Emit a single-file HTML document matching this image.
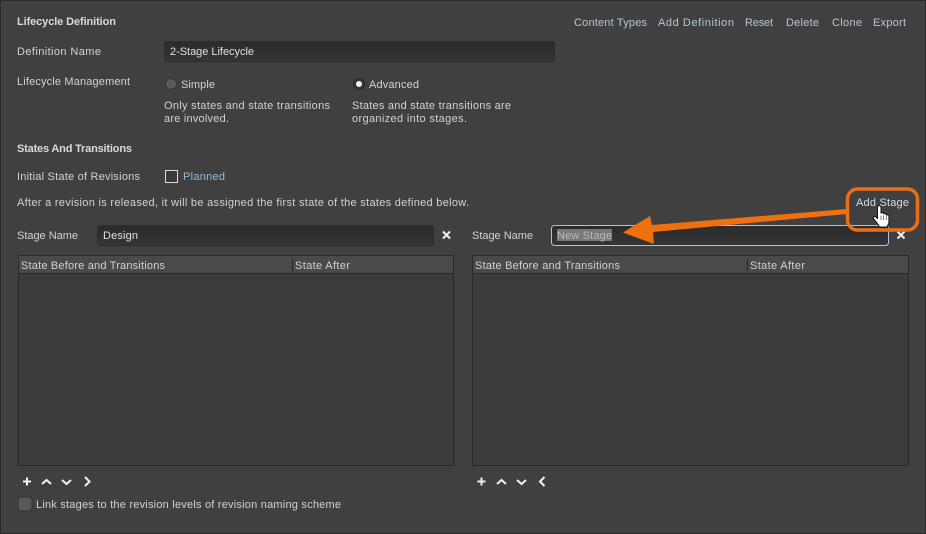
<!DOCTYPE html>
<html><head><meta charset="utf-8"><title>Lifecycle Definition</title>
<style>
html,body{margin:0;padding:0;background:#404040;width:926px;height:534px;overflow:hidden}
svg{display:block}
text{font-family:"Liberation Sans",sans-serif;font-size:11px;fill:#d2d2d2}
.b{font-weight:bold;fill:#dadada}
.l{fill:#b4c6d6}
.i{fill:none;stroke:#f2f2f2;stroke-width:2}
</style></head><body>
<svg width="926" height="534" viewBox="0 0 926 534" xmlns="http://www.w3.org/2000/svg">
<defs><linearGradient id="g" x1="0" y1="0" x2="0" y2="1"><stop offset="0" stop-color="#2b2b2b"/><stop offset="1" stop-color="#353535"/></linearGradient></defs>
<rect width="926" height="534" fill="#404040"/>
<rect x="0.5" y="0.5" width="925" height="533" fill="none" stroke="#2a2a2a"/>

<text class="b" x="17" y="25" textLength="99">Lifecycle Definition</text>
<text class="l" x="574" y="26" textLength="73">Content Types</text>
<text class="l" x="658" y="26" textLength="76">Add Definition</text>
<text class="l" x="745" y="26" textLength="28">Reset</text>
<text class="l" x="786" y="26" textLength="33">Delete</text>
<text class="l" x="832" y="26" textLength="30">Clone</text>
<text class="l" x="873" y="26" textLength="33">Export</text>

<text x="17" y="55" textLength="84">Definition Name</text>
<rect x="164.5" y="41.5" width="390" height="20" rx="3" fill="url(#g)" stroke="#2c2c2c"/>
<text x="170" y="55" textLength="84" style="fill:#e0e0e0">2-Stage Lifecycle</text>

<text x="17" y="85" textLength="113">Lifecycle Management</text>
<circle cx="171" cy="84" r="5.5" fill="#5a5a5a" stroke="#383838"/>
<text x="181" y="88" textLength="34">Simple</text>
<text x="164" y="109" textLength="166">Only states and state transitions</text>
<text x="164" y="122" textLength="65">are involved.</text>
<circle cx="359" cy="84" r="5.5" fill="#333" stroke="#2c2c2c"/>
<circle cx="359" cy="84" r="3" fill="#f4f4f4"/>
<text x="369" y="88" textLength="50">Advanced</text>
<text x="352" y="109" textLength="159">States and state transitions are</text>
<text x="352" y="122" textLength="115">organized into stages.</text>

<text class="b" x="17" y="152" textLength="115">States And Transitions</text>
<text x="17" y="180" textLength="123">Initial State of Revisions</text>
<rect x="165.5" y="170.5" width="12" height="12" fill="#3a3a3a" stroke="#dcdcdc"/>
<text x="183" y="180" textLength="42" style="fill:#93bcd6">Planned</text>
<text x="17" y="206" textLength="452">After a revision is released, it will be assigned the first state of the states defined below.</text>

<text x="17" y="239" textLength="61">Stage Name</text>
<rect x="97.5" y="225.5" width="336" height="20" rx="3" fill="url(#g)" stroke="#2c2c2c"/>
<text x="103" y="239" textLength="35" style="fill:#e0e0e0">Design</text>
<path class="i" d="M443 231.500l7 7M450 231.500l-7 7" stroke-width="2.200"/>

<text x="472" y="239" textLength="61">Stage Name</text>
<rect x="551.500" y="225.500" width="337" height="20" rx="3" fill="url(#g)" stroke="#a9c6dc"/>
<rect x="557" y="229" width="55" height="12" fill="#787878"/>
<text x="557" y="239" textLength="55" style="fill:#b8b8b8">New Stage</text>
<path class="i" d="M897.500 231.500l7 7M904.500 231.500l-7 7" stroke-width="2.200"/>

<!-- left table -->
<rect x="18.500" y="255.500" width="435" height="210" fill="#3c3c3c" stroke="#2a2a2a"/>
<rect x="19" y="256" width="434" height="17" fill="#4a4a4a"/>
<line x1="19" x2="453" y1="273.500" y2="273.500" stroke="#2a2a2a"/>
<line x1="292.500" x2="292.500" y1="259" y2="271" stroke="#252525"/>
<text x="21" y="269" textLength="144">State Before and Transitions</text>
<text x="295" y="269" textLength="55">State After</text>

<!-- right table -->
<rect x="472.500" y="255.500" width="436" height="210" fill="#3c3c3c" stroke="#2a2a2a"/>
<rect x="473" y="256" width="435" height="17" fill="#4a4a4a"/>
<line x1="473" x2="908" y1="273.500" y2="273.500" stroke="#2a2a2a"/>
<line x1="747.500" x2="747.500" y1="259" y2="271" stroke="#252525"/>
<text x="475" y="269" textLength="145">State Before and Transitions</text>
<text x="750" y="269" textLength="55">State After</text>

<!-- toolbars -->
<path class="i" d="M23 481.500h8M27 477.500v8"/>
<path class="i" d="M42 484l4.500-4 4.500 4"/>
<path class="i" d="M62 480l4.500 4 4.500-4"/>
<path class="i" d="M85 477l4.500 4.500-4.500 4.500"/>
<path class="i" d="M477.500 481.500h8M481.500 477.500v8"/>
<path class="i" d="M497 484l4.500-4 4.500 4"/>
<path class="i" d="M517 480l4.500 4 4.500-4"/>
<path class="i" d="M544.500 477l-4.500 4.500 4.500 4.500"/>

<rect x="18" y="497" width="14" height="14" rx="3" fill="#585858" stroke="#2f2f2f"/>
<text x="36" y="508" textLength="305">Link stages to the revision levels of revision naming scheme</text>

<!-- Add Stage -->
<text x="856" y="206" textLength="53" style="fill:#d4dde6">Add Stage</text>

<!-- orange callout -->
<rect x="847.500" y="189" width="70" height="41" rx="10" fill="none" stroke="#e9701a" stroke-width="3.500"/>
<path d="M847 209L652 225L650 216L623 232.500L654 244L653 232L847 214Z" fill="#f07010"/>

<!-- hand cursor -->
<rect x="879" y="223" width="9" height="4" fill="#000"/>
<path d="M877.500 206.500c1-1.500 3.500-1 3.500 .7v6.300c.2-1.300 2.700-1.300 2.700 .2v.6c.3-1.200 2.600-1.200 2.600 .4v.8c.4-1 2.600-.8 2.600 .8v6.200c0 1.500-1 2.500-1.500 3.500v1h-8.500v-1.500l-5.200-6.800c-1-1.500 .8-3 2.200-1.700l1.600 1.500z" fill="#fff" stroke="#111" stroke-width="1"/>
<path d="M881 215.500v4.500M883.700 215.500v4.500M886.300 216v4" stroke="#444" stroke-width=".7" fill="none"/>
</svg>
</body></html>
